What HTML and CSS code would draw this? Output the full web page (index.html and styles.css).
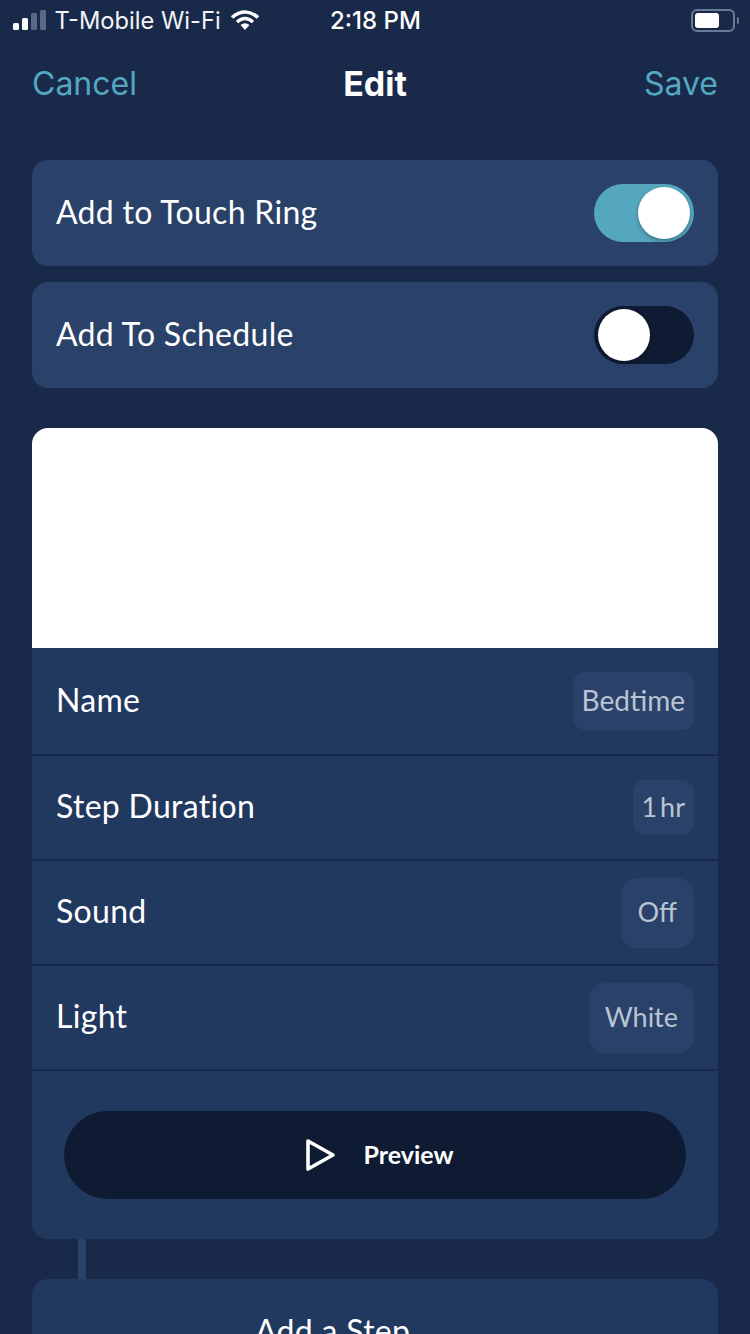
FILE: index.html
```html
<!DOCTYPE html>
<html>
  <head>
    <title>Edit</title>
    <link rel="stylesheet" href="styles.css">
  </head>
  <body>
    <div class="status-bar">
      <div class="status-left">
        <div class="signal">
          <span class="bar bar-1"></span>
          <span class="bar bar-2"></span>
          <span class="bar bar-3 off"></span>
          <span class="bar bar-4 off"></span>
        </div>
        <span class="carrier">T-Mobile Wi-Fi</span>
        <svg class="wifi" width="30" height="22" viewBox="0 0 30 22">
          <path d="M2 8.5 Q15 -2.5 28 8.5" fill="none" stroke="#fff" stroke-width="3.6"/>
          <path d="M7 13 Q15 6 23 13" fill="none" stroke="#fff" stroke-width="3.4"/>
          <path d="M10.5 16 Q15 12.5 19.5 16 L15 21 Z" fill="#fff"/>
        </svg>
      </div>
      <span class="clock">2:18 PM</span>
      <div class="battery">
        <div class="battery-body"><div class="battery-fill"></div></div>
        <div class="battery-cap"></div>
      </div>
    </div>

    <div class="nav">
      <span class="nav-link">Cancel</span>
      <span class="nav-title">Edit</span>
      <span class="nav-link">Save</span>
    </div>

    <div class="content">
      <div class="toggle-card">
        <span class="label">Add to Touch Ring</span>
        <div class="switch on"><div class="knob"></div></div>
      </div>
      <div class="toggle-card">
        <span class="label">Add To Schedule</span>
        <div class="switch"><div class="knob"></div></div>
      </div>

      <div class="panel">
        <div class="preview-image"></div>
        <div class="row row-first">
          <span class="label">Name</span>
          <span class="value value-name">Bedtime</span>
        </div>
        <div class="row">
          <span class="label">Step Duration</span>
          <span class="value value-duration">1 hr</span>
        </div>
        <div class="row">
          <span class="label">Sound</span>
          <span class="value value-sound">Off</span>
        </div>
        <div class="row">
          <span class="label">Light</span>
          <span class="value value-light">White</span>
        </div>
        <div class="preview-area">
          <div class="preview-button">
            <svg width="30" height="34" viewBox="0 0 30 34">
              <path d="M2 3 L27 17 L2 31 Z" fill="none" stroke="#fff" stroke-width="3.6" stroke-linejoin="round"/>
            </svg>
            <span class="preview-text">Preview</span>
          </div>
        </div>
      </div>

      <div class="connector"></div>

      <div class="add-step">Add a Step</div>
    </div>
  </body>
</html>
```

FILE: styles.css
```css
html, body {
  height: 1334px;
  overflow: hidden;
}
body {
  font-family: Lato, sans-serif;
  margin: 0;
  padding: 0;
  background-color: #19294A;
  color: #FFFFFF;
}

/* status bar */
.status-bar {
  height: 40px;
  padding: 0 11px 0 13px;
  display: flex;
  align-items: center;
  justify-content: space-between;
  font-family: Inter, sans-serif;
  box-sizing: border-box;
}
.status-left {
  width: 247px;
  display: flex;
  align-items: center;
}
.signal {
  display: flex;
  align-items: flex-end;
  gap: 3.5px;
  height: 20px;
}
.bar {
  width: 5.5px;
  border-radius: 1.5px;
  background-color: #FFFFFF;
}
.bar.off {
  background-color: #5A6A86;
}
.bar-1 { height: 7px; }
.bar-2 { height: 12px; }
.bar-3 { height: 17px; }
.bar-4 { height: 20px; }
.carrier {
  font-size: 23.7px;
  margin-left: 9px;
  white-space: nowrap;
  color: #F2F4F7;
}
.wifi {
  margin-left: 9px;
  flex-shrink: 0;
}
.clock {
  font-size: 24px;
  font-weight: 500;
  margin-left: 70px;
  margin-right: auto;
}
.battery {
  display: flex;
  align-items: center;
  gap: 2px;
}
.battery-body {
  width: 44px;
  height: 23px;
  box-sizing: border-box;
  border: 2px solid #6B7A94;
  border-radius: 6px;
  padding: 2px;
}
.battery-fill {
  width: 24px;
  height: 15px;
  border-radius: 3px;
  background-color: #FFFFFF;
}
.battery-cap {
  width: 2px;
  height: 7px;
  background-color: #6B7A94;
  border-radius: 0 2px 2px 0;
}

/* nav */
.nav {
  height: 88px;
  padding: 0 32px 1px;
  display: flex;
  align-items: center;
  justify-content: space-between;
  box-sizing: border-box;
}
.nav-link {
  font-family: Inter, sans-serif;
  font-size: 32px;
  color: #55A7C0;
  width: 120px;
}
.nav-link:last-child {
  text-align: right;
}
.nav-title {
  font-family: Inter, sans-serif;
  font-size: 34px;
  font-weight: 700;
}

/* content */
.content {
  padding: 32px 32px 0;
}
.toggle-card {
  height: 106px;
  margin-bottom: 16px;
  padding: 0 24px;
  display: flex;
  align-items: center;
  justify-content: space-between;
  background-color: #2A4269;
  border-radius: 16px;
}
.label {
  font-size: 32px;
  letter-spacing: 0.3px;
  margin-bottom: 4px;
}
.switch {
  width: 100px;
  height: 58px;
  padding: 3px 4px;
  box-sizing: border-box;
  display: flex;
  border-radius: 29px;
  background-color: #0E1B33;
}
.switch.on {
  justify-content: flex-end;
  background-color: #55A7C0;
}
.knob {
  width: 52px;
  height: 52px;
  border-radius: 50%;
  background-color: #FFFFFF;
  box-shadow: 0 2px 4px rgba(0, 0, 0, 0.3);
}

.panel {
  margin-top: 40px;
  background-color: #22395F;
  border-radius: 16px;
  overflow: hidden;
}
.preview-image {
  height: 220px;
  background-color: #FFFFFF;
}
.row {
  height: 105px;
  padding: 0 24px;
  display: flex;
  align-items: center;
  justify-content: space-between;
  box-sizing: border-box;
  border-bottom: 2px solid #19294A;
}
.row-first {
  height: 108px;
}
.value {
  font-size: 28px;
  color: #BAC4D4;
  padding: 0 9px 3px;
  background-color: #2A4269;
  border-radius: 12px;
  display: flex;
  align-items: center;
  box-sizing: border-box;
}
.value-name { height: 58px; }
.value-duration { height: 55px; font-size: 27px; word-spacing: -4px; }
.value-sound { height: 70px; padding: 0 17px 3px; border-radius: 16px; font-size: 27px; }
.value-light { height: 70px; padding: 0 16px 3px; border-radius: 16px; font-size: 27px; }

.preview-area {
  height: 168px;
  padding: 40px 32px;
  box-sizing: border-box;
}
.preview-button {
  height: 88px;
  padding-left: 10px;
  border-radius: 44px;
  background-color: #0E1B33;
  display: flex;
  align-items: center;
  justify-content: center;
  gap: 27px;
  font-size: 25px;
  font-weight: 700;
}
.preview-text {
  margin-bottom: 2px;
}
.connector {
  width: 8px;
  height: 40px;
  margin-left: 46px;
  background-color: #2A4269;
}
.add-step {
  height: 110px;
  padding: 32px 0 0 223px;
  box-sizing: border-box;
  font-size: 32px;
  letter-spacing: 0.3px;
  background-color: #22395F;
  border-radius: 16px 16px 0 0;
}
```
